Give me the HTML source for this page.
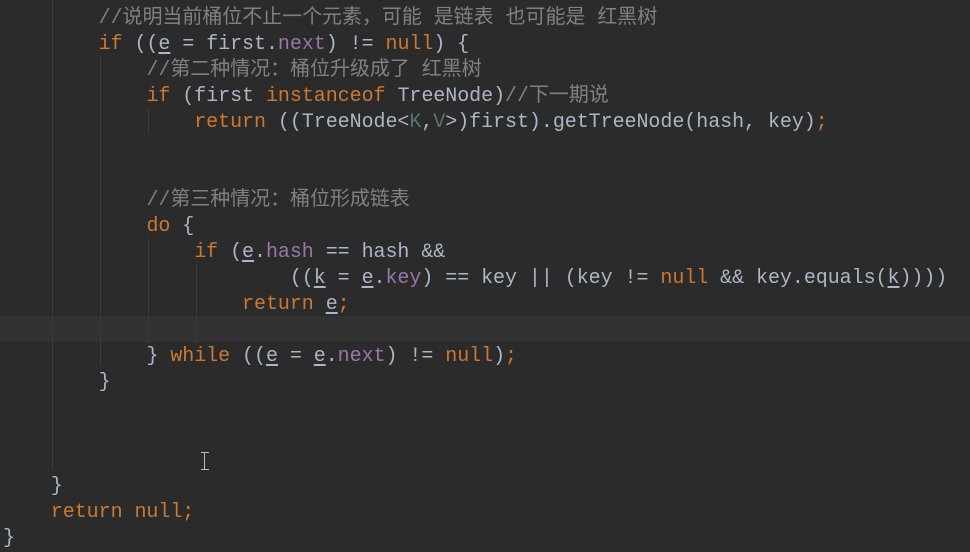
<!DOCTYPE html><html><head><style>
body{margin:0;width:970px;height:551px;background:#2b2b2b;overflow:hidden;position:relative;font-family:"Liberation Mono","Noto Sans CJK SC",monospace;font-size:20px;color:#a9b7c6}
.l{position:absolute;left:3px;height:26px;line-height:26px;white-space:pre;letter-spacing:-0.05px}
.k{color:#cc7832}.c{color:#808080}.f{color:#9876aa}.g{color:#507874}
u{text-decoration:underline;text-underline-offset:3px}
.gd{position:absolute;width:1px;background:#3b3b3b}
.cc{font-size:20px;line-height:0;font-family:"Noto Sans CJK SC",sans-serif;vertical-align:0}
</style></head><body>
<div style="position:absolute;left:0;top:316px;width:970px;height:26px;background:#323232"></div>
<div class="gd" style="left:52px;top:0;height:470px"></div>
<div class="gd" style="left:100px;top:56px;height:310px"></div>
<div class="gd" style="left:148px;top:108px;height:26px"></div>
<div class="gd" style="left:148px;top:238px;height:104px"></div>
<div class="gd" style="left:196px;top:264px;height:78px"></div>
<div class="l" style="top:6px">        <span class="c">//<span class="cc">说明当前桶位不止一个元素，可能</span> <span class="cc">是链表</span> <span class="cc">也可能是</span> <span class="cc">红黑树</span></span></div>
<div class="l" style="top:32px">        <span class="k">if</span> ((<u>e</u> = first.<span class="f">next</span>) != <span class="k">null</span>) {</div>
<div class="l" style="top:58px">            <span class="c">//<span class="cc">第二种情况：桶位升级成了</span> <span class="cc">红黑树</span></span></div>
<div class="l" style="top:84px">            <span class="k">if</span> (first <span class="k">instanceof</span> TreeNode)<span class="c">//<span class="cc">下一期说</span></span></div>
<div class="l" style="top:110px">                <span class="k">return</span> ((TreeNode&lt;<span class="g">K</span>,<span class="g">V</span>&gt;)first).getTreeNode(hash, key)<span class="k">;</span></div>
<div class="l" style="top:188px">            <span class="c">//<span class="cc">第三种情况：桶位形成链表</span></span></div>
<div class="l" style="top:214px">            <span class="k">do</span> {</div>
<div class="l" style="top:240px">                <span class="k">if</span> (<u>e</u>.<span class="f">hash</span> == hash &amp;&amp;</div>
<div class="l" style="top:266px">                        ((<u>k</u> = <u>e</u>.<span class="f">key</span>) == key || (key != <span class="k">null</span> &amp;&amp; key.equals(<u>k</u>))))</div>
<div class="l" style="top:292px">                    <span class="k">return</span> <u>e</u><span class="k">;</span></div>
<div class="l" style="top:344px">            } <span class="k">while</span> ((<u>e</u> = <u>e</u>.<span class="f">next</span>) != <span class="k">null</span>)<span class="k">;</span></div>
<div class="l" style="top:370px">        }</div>
<div class="l" style="top:474px">    }</div>
<div class="l" style="top:500px">    <span class="k">return null;</span></div>
<div class="l" style="top:526px">}</div>
<div style="position:absolute;left:201px;top:452px;width:8px;height:16px;border-top:1px solid #bbb;border-bottom:1px solid #bbb"><div style="margin-left:3px;width:1px;height:16px;background:#bbb"></div></div>
</body></html>
